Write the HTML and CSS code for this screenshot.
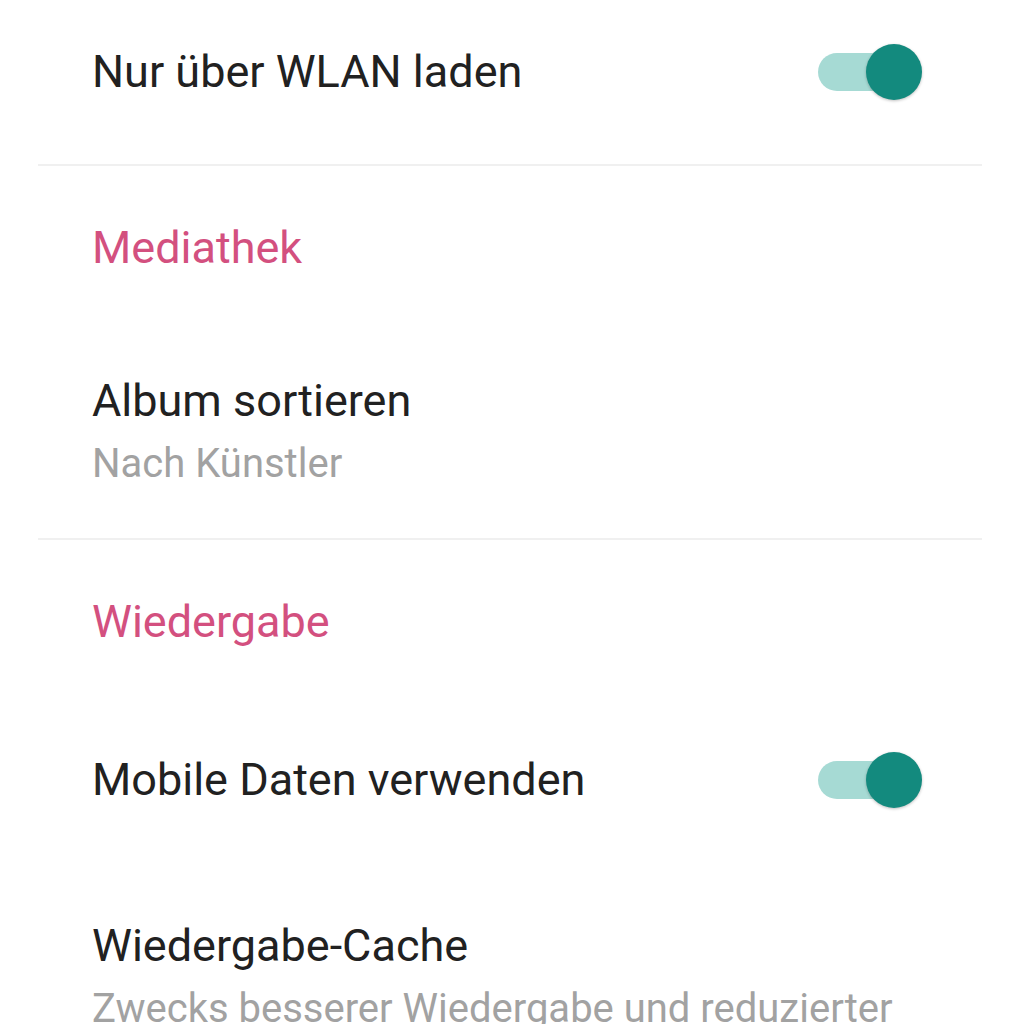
FILE: index.html
```html
<!DOCTYPE html>
<html lang="de">
<head>
  <meta charset="UTF-8" />
  <meta name="viewport" content="width=device-width, initial-scale=1.0"/>
  <title>Einstellungen</title>
  <link rel="stylesheet" href="styles.css">
</head>
<body>
  <div class="settings">
    <div class="row row-top">
      <div class="text">
        <div class="title">Nur über WLAN laden</div>
      </div>
      <span class="switch on"></span>
    </div>

    <div class="category">Mediathek</div>

    <div class="row row-two divided">
      <div class="text">
        <div class="title">Album sortieren</div>
        <div class="summary">Nach Künstler</div>
      </div>
    </div>

    <div class="category">Wiedergabe</div>

    <div class="row row-single">
      <div class="text">
        <div class="title">Mobile Daten verwenden</div>
      </div>
      <span class="switch on"></span>
    </div>

    <div class="row row-two">
      <div class="text">
        <div class="title">Wiedergabe-Cache</div>
        <div class="summary">Zwecks besserer Wiedergabe und reduzierter Datennutzung werden Titel zwischengespeichert</div>
      </div>
    </div>
  </div>
</body>
</html>
```

FILE: styles.css
```css
body {
  margin: 0;
  background: #fff;
  font-family: Roboto, "Noto Sans", sans-serif;
  color: #212121;
  overflow: hidden;
}
.settings {
  padding: 0 42px 0 38px;
}
.row {
  display: flex;
  align-items: center;
  padding: 0 18px 0 54px;
}
.row .switch {
  margin-right: 42px;
}
.row-top {
  padding-top: 44px;
  padding-bottom: 64px;
  border-bottom: 2px solid #f0f0f0;
}
.row-single {
  padding-top: 58px;
  padding-bottom: 57px;
}
.row-two {
  padding-top: 55px;
  padding-bottom: 50px;
}
.divided {
  border-bottom: 2px solid #f0f0f0;
}
.text {
  flex: 1;
  min-width: 0;
}
.title {
  font-size: 45px;
  line-height: 52px;
}
.summary {
  margin-top: 13px;
  font-size: 40px;
  line-height: 48px;
  color: #a2a2a2;
}
.category {
  padding: 56px 54px 46px;
  font-size: 45px;
  line-height: 52px;
  color: #d3507f;
}
.switch {
  position: relative;
  flex: none;
  width: 104px;
  height: 56px;
}
.switch::before {
  content: "";
  position: absolute;
  left: 0;
  top: 9px;
  width: 86px;
  height: 38px;
  border-radius: 19px;
  background: #a6dad4;
}
.switch::after {
  content: "";
  position: absolute;
  right: 0;
  top: 0;
  width: 56px;
  height: 56px;
  border-radius: 50%;
  background: #138a7e;
  box-shadow: 0 1px 3px rgba(0,0,0,0.25);
}
```
